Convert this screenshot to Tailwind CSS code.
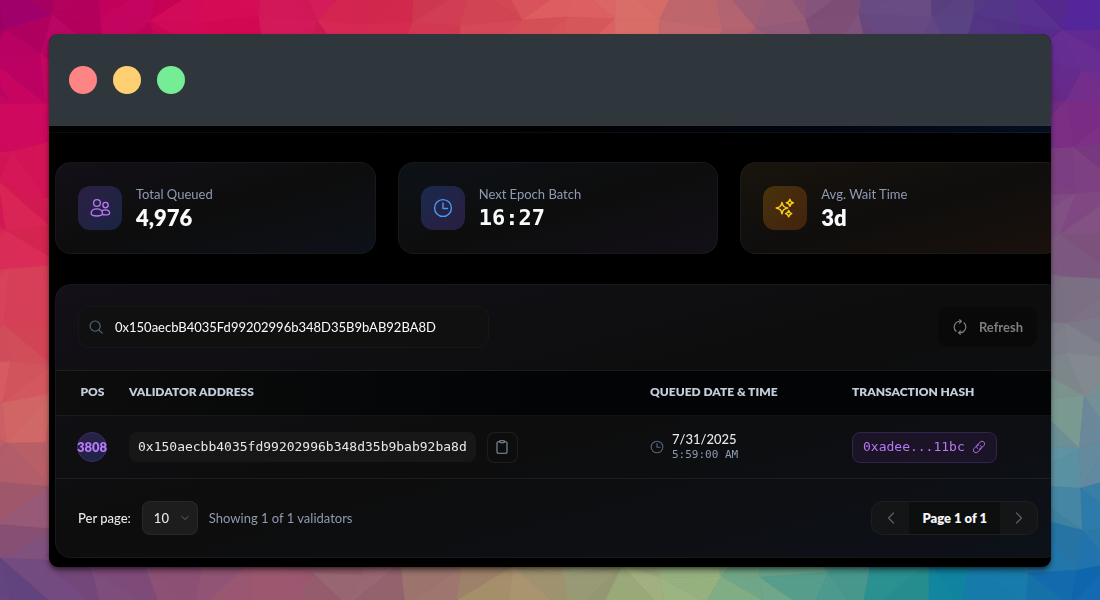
<!DOCTYPE html>
<html lang="en">
<head>
    <meta charset="UTF-8">
    <meta name="viewport" content="width=device-width, initial-scale=1.0">
    <title>Validator queue</title>
    <script src="https://cdn.jsdelivr.net/npm/@tailwindcss/browser@4"></script>
</head>
<body class="bg-[#a05070] font-['Lato','Liberation_Sans',sans-serif] text-[13px] leading-5 text-gray-200">
    <svg id="mesh" class="fixed inset-0 w-full h-full" viewBox="0 0 1100 600" preserveAspectRatio="none" aria-hidden="true"></svg>

    <div class="relative min-h-screen flex px-[49px] pt-[34px] pb-[33px]">
        <div class="flex-1 min-w-0 flex flex-col overflow-hidden rounded-[9px] bg-black shadow-md shadow-black/50">
            <!-- title bar -->
            <div class="h-[92px] shrink-0 flex items-center gap-4 px-5 bg-[#2f363c] border-b border-[#33383c]">
                <span class="size-7 rounded-full bg-[#ff8585]"></span>
                <span class="size-7 rounded-full bg-[#ffd071]"></span>
                <span class="size-7 rounded-full bg-[#74ed94]"></span>
            </div>
            <div class="h-[7px] shrink-0 bg-linear-to-r from-black from-20% to-[#040e1f] border-b border-white/5"></div>

            <main class="ml-[6px] -mr-[10px] pt-[29px] pb-[9px]">
                <!-- stats -->
                <div class="grid grid-cols-3 gap-[22px]">
                    <div class="flex items-center gap-[14px] h-[92px] px-[22px] rounded-2xl border border-white/4 bg-linear-to-br from-[#131018] via-[#0d0d0d] to-[#0d1119]">
                        <div class="size-11 rounded-xl flex items-center justify-center bg-linear-to-br from-[#2c1f42] to-[#182544] text-[#b877f5]">
                            <svg class="size-[22px]" viewBox="0 0 24 24" fill="none" stroke="currentColor" stroke-width="1.5" stroke-linejoin="round">
                                <circle cx="8.700" cy="6.500" r="3.700"/>
                                <circle cx="18" cy="8.800" r="2.900"/>
                                <path d="M2.300 18.100c0-3.200 2.800-5.200 6.200-5.200s6.200 2 6.200 5.200c0 1.700-2.800 2.600-6.200 2.600s-6.200-.9-6.200-2.600z"/>
                                <path d="M14 15.400c1-.9 2.400-1.300 3.800-1.300 2.600 0 4.700 1.500 4.700 3.500 0 1.300-2.300 1.900-4.700 1.900-1.200 0-2.400-.1-3.300-.4"/>
                            </svg>
                        </div>
                        <div>
                            <p class="text-[#8e9bb0]">Total Queued</p>
                            <p class="text-[22px] leading-7 font-extrabold text-gray-50">4,976</p>
                        </div>
                    </div>
                    <div class="flex items-center gap-[14px] h-[92px] px-[22px] rounded-2xl border border-white/4 bg-linear-to-br from-[#0d1218] via-[#0d0d0d] to-[#130f18]">
                        <div class="size-11 rounded-xl flex items-center justify-center bg-linear-to-br from-[#182a4c] to-[#2a1d40] text-[#4a9af5]">
                            <svg class="size-[22px]" viewBox="0 0 24 24" fill="none" stroke="currentColor" stroke-width="1.5" stroke-linecap="round" stroke-linejoin="round">
                                <circle cx="12" cy="12" r="9.200"/>
                                <path d="M12 6.500V12.500h5"/>
                            </svg>
                        </div>
                        <div>
                            <p class="text-[#8e9bb0]">Next Epoch Batch</p>
                            <p class="text-[22px] leading-7 font-bold font-['DejaVu_Sans_Mono',monospace] text-gray-50">16:27</p>
                        </div>
                    </div>
                    <div class="flex items-center gap-[14px] h-[92px] px-[22px] rounded-2xl border border-white/4 bg-linear-to-br from-[#19140d] via-[#0f0e0d] to-[#1a110c]">
                        <div class="size-11 rounded-xl flex items-center justify-center bg-linear-to-br from-[#47330c] to-[#43220d] text-[#facc15]">
                            <svg class="size-[22px]" viewBox="0 0 24 24" fill="none" stroke="currentColor" stroke-width="1.600" stroke-linejoin="round">
                                <path d="M8.700 6c.8 3.800 1.900 5 6.300 6-4.400 1-5.500 2.200-6.300 6.400C7.900 14.200 6.800 13 2.400 12c4.400-1 5.500-2.200 6.300-6z"/>
                                <path d="M17.300 2.500c.5 2.500 1.200 3.300 3.800 3.800-2.600.5-3.300 1.300-3.800 3.900-.5-2.600-1.200-3.400-3.800-3.900 2.600-.5 3.300-1.300 3.800-3.800z"/>
                                <path d="M16 14.700c.5 2.200 1.100 2.900 3.400 3.400-2.300.5-2.900 1.200-3.400 3.500-.5-2.300-1.100-3-3.400-3.500 2.300-.5 2.900-1.200 3.400-3.400z"/>
                            </svg>
                        </div>
                        <div>
                            <p class="text-[#8e9bb0]">Avg. Wait Time</p>
                            <p class="text-[22px] leading-7 font-extrabold text-gray-50">3d</p>
                        </div>
                    </div>
                </div>

                <!-- queue -->
                <section class="mt-[30px] rounded-2xl border border-white/4 overflow-hidden bg-linear-to-br from-[#131018] via-[#0d0d0d] to-[#0d1119]">
                    <div class="flex items-center justify-between px-[22px] pt-[21px] pb-[22px]">
                        <label class="w-[411px] h-[42px] flex items-center gap-3 px-[10px] rounded-xl border border-white/3 bg-[#101010]">
                            <svg class="size-[14px] shrink-0 text-[#56657c]" viewBox="0 0 16 16" fill="none" stroke="currentColor" stroke-width="1.300" stroke-linecap="round">
                                <circle cx="7" cy="7" r="5.800"/>
                                <path d="M11.300 11.300 15 15"/>
                            </svg>
                            <input type="text" aria-label="Search validators" value="0x150aecbB4035Fd99202996b348D35B9bAB92BA8D" class="flex-1 min-w-0 bg-transparent text-gray-50 outline-none">
                        </label>
                        <button type="button" class="h-[42px] flex items-center gap-[11px] px-[14px] rounded-xl border border-white/2 bg-[#090909] font-bold text-[#7c7d80]">
                            <svg class="size-4" viewBox="0 0 16 16" fill="none" stroke="currentColor" stroke-width="1.200" stroke-linecap="round" stroke-linejoin="round">
                                <path d="M8.800 2.300A5.800 5.800 0 0 0 4 12.200M7.200 13.700A5.800 5.800 0 0 0 12 3.800M7.600 .8l1.800 1.500-1.800 1.700M8.400 15.200l-1.800-1.500 1.800-1.700"/>
                            </svg>
                            Refresh
                        </button>
                    </div>

                    <table class="w-full table-fixed border-y border-white/6">
                        <thead class="bg-linear-to-r from-[#0d0d0d] to-[#030405] to-50% text-[12px] leading-4 text-[#c3cddb]">
                            <tr class="h-[45px] text-left border-b border-white/6">
                                <th class="w-[62px] pl-[22px] pr-[11px] pb-[3px] text-center font-extrabold">POS</th>
                                <th class="px-[11px] pb-[3px] font-extrabold">VALIDATOR ADDRESS</th>
                                <th class="w-[202px] px-[11px] pb-[3px] font-extrabold">QUEUED DATE &amp; TIME</th>
                                <th class="w-[219px] px-[11px] pb-[3px] font-extrabold">TRANSACTION HASH</th>
                            </tr>
                        </thead>
                        <tbody>
                            <tr class="h-[63px]">
                                <td class="pl-[21px] pr-[11px]">
                                    <div class="size-[30px] rounded-full border border-[#3a2d66] bg-linear-to-br from-[#2b1f45] to-[#192648] flex items-center justify-center font-extrabold text-[#b877f5]">3808</div>
                                </td>
                                <td class="px-[11px]">
                                    <div class="flex items-center gap-[11px]">
                                        <code class="h-[30px] leading-[30px] px-[9px] rounded-lg bg-[#171717] font-['DejaVu_Sans_Mono',monospace] text-[13px] text-gray-200">0x150aecbb4035fd99202996b348d35b9bab92ba8d</code>
                                        <button type="button" aria-label="Copy address" class="size-[31px] shrink-0 rounded-lg border border-white/7 bg-[#0d0d0d] flex items-center justify-center text-[#8694aa]">
                                            <svg class="size-[14px]" viewBox="0 0 14 14" fill="none" stroke="currentColor" stroke-width="1.100" stroke-linejoin="round">
                                                <path d="M4.500 1.700H3.300c-.8 0-1.300.5-1.300 1.300v9c0 .8.5 1.300 1.300 1.300h7.400c.8 0 1.300-.5 1.300-1.300v-9c0-.8-.5-1.300-1.300-1.300H9.500"/>
                                                <path d="M4.700 .7h4.600v1.200c0 .6-.3.9-.9.9H5.600c-.6 0-.9-.3-.9-.9z"/>
                                            </svg>
                                        </button>
                                    </div>
                                </td>
                                <td class="px-[11px]">
                                    <div class="flex items-center gap-2">
                                        <svg class="size-[14px] text-[#56657c]" viewBox="0 0 14 14" fill="none" stroke="currentColor" stroke-width="1.100" stroke-linecap="round" stroke-linejoin="round">
                                            <circle cx="7" cy="7" r="5.800"/>
                                            <path d="M7 3.500V7.300h3"/>
                                        </svg>
                                        <div>
                                            <p class="leading-4 font-medium text-gray-200">7/31/2025</p>
                                            <p class="leading-4 text-[11px] font-['DejaVu_Sans_Mono',monospace] text-[#8e9bb0]">5:59:00 AM</p>
                                        </div>
                                    </div>
                                </td>
                                <td class="px-[11px]">
                                    <a href="#" class="inline-flex items-center gap-[7px] h-[31px] px-[10px] rounded-lg border border-[#33234f] bg-[#1a1426] font-['DejaVu_Sans_Mono',monospace] text-[13px] text-[#b877f5]">
                                        0xadee...11bc
                                        <svg class="size-[14px]" viewBox="0 0 24 24" fill="none" stroke="currentColor" stroke-width="1.600" stroke-linecap="round" stroke-linejoin="round">
                                            <path d="M9.200 14.400c-1.700-1.700-1.700-4.300 0-6l4.900-4.900c1.700-1.700 4.500-1.700 6.200 0s1.700 4.500 0 6.200l-4.900 4.900c-.8.8-1.800 1.200-2.900 1.200"/>
                                            <path d="M14.800 9.600c1.700 1.700 1.700 4.300 0 6l-4.900 4.900c-1.700 1.700-4.500 1.700-6.200 0s-1.700-4.500 0-6.200l4.900-4.900c.8-.8 1.800-1.200 2.900-1.200"/>
                                        </svg>
                                    </a>
                                </td>
                            </tr>
                        </tbody>
                    </table>

                    <div class="flex items-center justify-between p-[22px]">
                        <div class="flex items-center gap-[11px]">
                            <label for="perPage" class="font-medium text-gray-200">Per page:</label>
                            <div class="relative flex items-center">
                                <select id="perPage" class="appearance-none w-14 h-[34px] pl-[11px] rounded-lg border border-white/5 bg-[#1d1d1d] font-medium text-gray-200">
                                    <option>10</option>
                                    <option>25</option>
                                    <option>50</option>
                                </select>
                                <svg class="absolute right-[9px] w-2 h-2 text-[#5b6575] pointer-events-none" viewBox="0 0 8 8" fill="none" stroke="currentColor" stroke-linecap="round" stroke-linejoin="round"><path d="M.8 2.500 4 5.500l3.200-3"/></svg>
                            </div>
                            <span class="text-[#8e9bb0]">Showing 1 of 1 validators</span>
                        </div>
                        <nav aria-label="Pagination" class="flex h-[34px] rounded-xl border border-white/4 overflow-hidden bg-[#141517] text-[#5d6067]">
                            <button type="button" aria-label="Previous page" class="w-[37px] flex items-center justify-center">
                                <svg class="w-2 h-3" viewBox="0 0 8 12" fill="none" stroke="currentColor" stroke-width="1.200" stroke-linecap="round" stroke-linejoin="round"><path d="M6.500 1 1.500 6l5 5"/></svg>
                            </button>
                            <span class="px-[13px] leading-8 font-extrabold bg-[#0d0e0e] text-gray-100">Page 1 of 1</span>
                            <button type="button" aria-label="Next page" class="w-[37px] flex items-center justify-center">
                                <svg class="w-2 h-3" viewBox="0 0 8 12" fill="none" stroke="currentColor" stroke-width="1.200" stroke-linecap="round" stroke-linejoin="round"><path d="m1.500 1 5 5-5 5"/></svg>
                            </button>
                        </nav>
                    </div>
                </section>
            </main>
        </div>
    </div>

    <script>
        // colour stops round the edge of the backdrop: x, y, r, g, b
        const stops = [
            [0, 0, 156, 0, 106], [60, 10, 180, 2, 95], [130, 10, 196, 4, 94], [220, 15, 211, 8, 83],
            [300, 10, 207, 22, 85], [380, 15, 214, 42, 80], [450, 10, 208, 60, 82], [500, 15, 214, 74, 88],
            [560, 20, 218, 90, 92], [640, 15, 216, 108, 102], [700, 15, 189, 103, 108], [770, 20, 152, 92, 118],
            [830, 10, 129, 81, 121], [900, 10, 102, 72, 128], [960, 15, 91, 69, 131], [1000, 15, 82, 52, 135],
            [1060, 15, 85, 40, 140], [1095, 5, 80, 34, 154],
            [1080, 60, 101, 42, 142], [1080, 120, 123, 44, 133], [1080, 180, 124, 63, 128], [1080, 240, 126, 82, 126],
            [1075, 300, 125, 114, 134], [1075, 360, 128, 130, 140], [1070, 400, 127, 159, 144], [1090, 440, 106, 134, 155],
            [1070, 470, 88, 144, 160], [1090, 520, 40, 120, 168], [1090, 590, 16, 104, 176],
            [1000, 590, 20, 120, 168], [950, 580, 16, 133, 160], [900, 585, 42, 144, 144], [830, 580, 79, 156, 144],
            [760, 585, 112, 168, 138], [700, 580, 152, 180, 128], [640, 580, 158, 174, 124], [580, 585, 150, 152, 116],
            [520, 580, 168, 146, 108], [430, 585, 155, 115, 108], [370, 580, 150, 100, 112], [260, 580, 155, 86, 110],
            [180, 590, 140, 80, 116], [100, 585, 122, 74, 122], [50, 590, 106, 70, 128], [10, 590, 92, 68, 132],
            [25, 560, 125, 80, 124], [25, 520, 148, 86, 116], [25, 475, 180, 96, 108], [25, 430, 208, 104, 102],
            [25, 380, 212, 86, 94], [25, 310, 214, 64, 86], [25, 240, 216, 40, 84], [20, 170, 212, 20, 86],
            [20, 110, 204, 4, 92], [20, 60, 184, 0, 98]
        ];
        let seed = 7;
        function rand() {
            seed = (seed * 16807) % 2147483647;
            return seed / 2147483647;
        }
        function colorAt(x, y) {
            let sum = 0, c = [0, 0, 0];
            for (const s of stops) {
                const w = 1 / Math.pow((x - s[0]) ** 2 + (y - s[1]) ** 2 + 400, 2);
                sum += w;
                for (let i = 0; i < 3; i++) c[i] += w * s[i + 2];
            }
            const shade = (rand() - 0.5) * 8;
            return 'rgb(' + c.map(v => Math.round(v / sum + shade)).join(',') + ')';
        }

        const cols = 24, rows = 16, points = [];
        for (let r = 0; r <= rows; r++) {
            points.push([]);
            for (let c = 0; c <= cols; c++) {
                points[r].push([
                    -50 + c * 51 + (rand() - 0.5) * 26,
                    -20 + r * 42 + (rand() - 0.5) * 20
                ]);
            }
        }
        let html = '';
        function triangle(a, b, c) {
            const fill = colorAt((a[0] + b[0] + c[0]) / 3, (a[1] + b[1] + c[1]) / 3);
            html += `<polygon points="${a} ${b} ${c}" fill="${fill}" stroke="${fill}" stroke-width="0.6"/>`;
        }
        for (let r = 0; r < rows; r++) {
            for (let c = 0; c < cols; c++) {
                const a = points[r][c], b = points[r][c + 1], d = points[r + 1][c], e = points[r + 1][c + 1];
                if (rand() > 0.5) {
                    triangle(a, b, e);
                    triangle(a, e, d);
                } else {
                    triangle(a, b, d);
                    triangle(b, e, d);
                }
            }
        }
        document.getElementById('mesh').innerHTML = html;
    </script>
</body>
</html>
